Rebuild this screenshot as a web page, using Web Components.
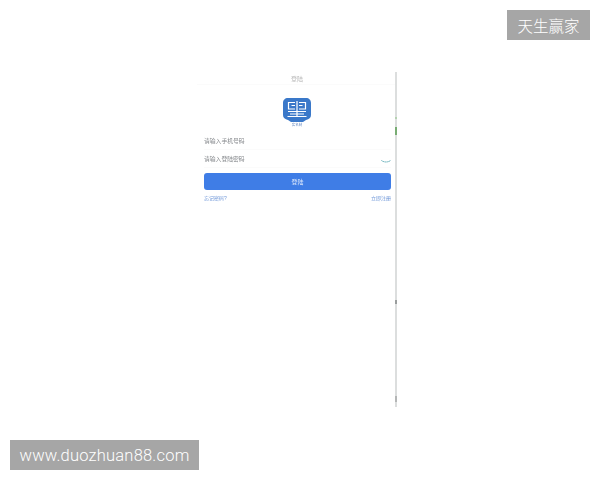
<!DOCTYPE html>
<html lang="zh">
<head>
<meta charset="utf-8">
<title>登陆</title>
<style>
  html, body { margin: 0; background: #fff; }
  body { width: 600px; height: 480px; overflow: hidden; position: relative; font-family: "Liberation Sans", "Noto Sans CJK SC", sans-serif; }
</style>
</head>
<body>
<login-screen>
  <span slot="title">登陆</span>
  <app-logo slot="logo"></app-logo>
  <login-field slot="fields">请输入手机号码</login-field>
  <login-field slot="fields" eye>请输入登陆密码</login-field>
  <login-button slot="fields">登陆</login-button>
  <span slot="left">忘记密码?</span>
  <span slot="right">立即注册</span>
</login-screen>
<water-mark place="top">天生赢家</water-mark>
<water-mark place="bottom">www.duozhuan88.com</water-mark>

<script>
  class LoginScreen extends HTMLElement {
    constructor() {
      super();
      this.attachShadow({ mode: "open" });
      this.shadowRoot.innerHTML = `
        <style>
          :host { display: block; box-sizing: border-box; width: 200px; height: 335px; margin: 72px 0 0 197px;
            position: relative; }
          .line { position: absolute; top: 0; right: 0; width: 2px; height: 100%;
            background: linear-gradient(to bottom, #dcdede 45px, #b5d2b1 45px, #b5d2b1 47px, #dcdede 47px,
              #dcdede 55px, #78ad73 55px, #78ad73 63px, #dcdede 63px,
              #dcdede 228px, #9a9d9d 228px, #9a9d9d 232px, #dcdede 232px,
              #dcdede 324px, #b4b6b6 324px, #b4b6b6 330px, #dcdede 330px); filter: blur(0.3px); }
          .body { filter: blur(0.6px); width: 198px; }
          header { height: 12px; display: flex; align-items: center; justify-content: center;
            padding-left: 2px; font-size: 6px; color: #b8b8b8; border-bottom: 1px solid #fbfbfb; }
          .logo { display: flex; justify-content: center; padding-left: 2px; margin-top: 13px; }
          .fields { padding: 0 4px 0 7px; margin-top: 4px; }
          .links { display: flex; justify-content: space-between; padding: 0 4px 0 7px; margin-top: 4px;
            font-size: 5px; line-height: 8px; color: #6f97d8; }
        </style>
        <div class="line"></div>
        <div class="body">
          <header><slot name="title"></slot></header>
          <div class="logo"><slot name="logo"></slot></div>
          <div class="fields"><slot name="fields"></slot></div>
          <div class="links"><slot name="left"></slot><slot name="right"></slot></div>
        </div>`;
    }
  }

  class AppLogo extends HTMLElement {
    constructor() {
      super();
      this.attachShadow({ mode: "open" });
      this.shadowRoot.innerHTML = `
        <style>
          :host { display: flex; flex-direction: column; align-items: center; width: 28px; }
          svg { display: block; }
          span { font-size: 3.5px; line-height: 5px; margin-top: 1px; color: #6d8fc4; }
        </style>
        <svg width="28" height="24" viewBox="0 0 28 24">
          <path d="M5 0h18c3 0 5 2 5 5v12c0 3-2 4-5 5l-3 2H8l-3-2c-3-1-5-2-5-5V5c0-3 2-5 5-5z" fill="#3a78c9"/>
          <g fill="none" stroke="#fff" stroke-width="1.2">
            <path d="M12 4.5H5.5V11H12M8.5 7.5H12"/>
            <path d="M16 4.5h6.500V11H16M19.500 7.500H16"/>
            <path d="M14 3v15M5 13.500h18M7 16h14M4.500 18.500h19"/>
          </g>
        </svg>
        <span>实名制</span>`;
    }
  }

  class LoginField extends HTMLElement {
    constructor() {
      super();
      this.attachShadow({ mode: "open" });
      this.shadowRoot.innerHTML = `
        <style>
          :host { display: flex; align-items: center; justify-content: space-between; height: 18px;
            font-size: 5.8px; color: #85888c; border-bottom: 1px solid #fbfbfb; box-sizing: border-box; }
          svg { display: none; margin-top: 5px; }
          :host([eye]) svg { display: block; }
        </style>
        <slot></slot>
        <svg width="10" height="5" viewBox="0 0 10 5">
          <path d="M.5 1.500C3 3.500 7 3.500 9.500 1.500" fill="none" stroke="#4aa0ac" stroke-width="1" stroke-dasharray="1.300 .7"/>
        </svg>`;
    }
  }

  class LoginButton extends HTMLElement {
    constructor() {
      super();
      this.attachShadow({ mode: "open" });
      this.shadowRoot.innerHTML = `
        <style>
          :host { display: flex; align-items: center; justify-content: center; height: 17px; margin-top: 5px;
            border-radius: 3px; background: #3f7de6; color: #dfe9fb; font-size: 6px; }
        </style>
        <slot></slot>`;
    }
  }

  class WaterMark extends HTMLElement {
    constructor() {
      super();
      this.attachShadow({ mode: "open" });
      this.shadowRoot.innerHTML = `
        <style>
          :host { position: absolute; display: flex; align-items: center; justify-content: center; height: 30px;
            background: #a6a6a6; color: #fff; font-size: 15.5px; font-weight: 300;
            font-family: Roboto, "Noto Sans CJK SC", sans-serif; }
          :host([place="top"]) { top: 10px; right: 10px; width: 83px; }
          :host([place="bottom"]) { left: 10px; bottom: 10px; width: 189px; font-size: 16.5px; letter-spacing: 0.2px; }
        </style>
        <slot></slot>`;
    }
  }

  customElements.define("login-screen", LoginScreen);
  customElements.define("app-logo", AppLogo);
  customElements.define("login-field", LoginField);
  customElements.define("login-button", LoginButton);
  customElements.define("water-mark", WaterMark);
</script>
</body>
</html>
